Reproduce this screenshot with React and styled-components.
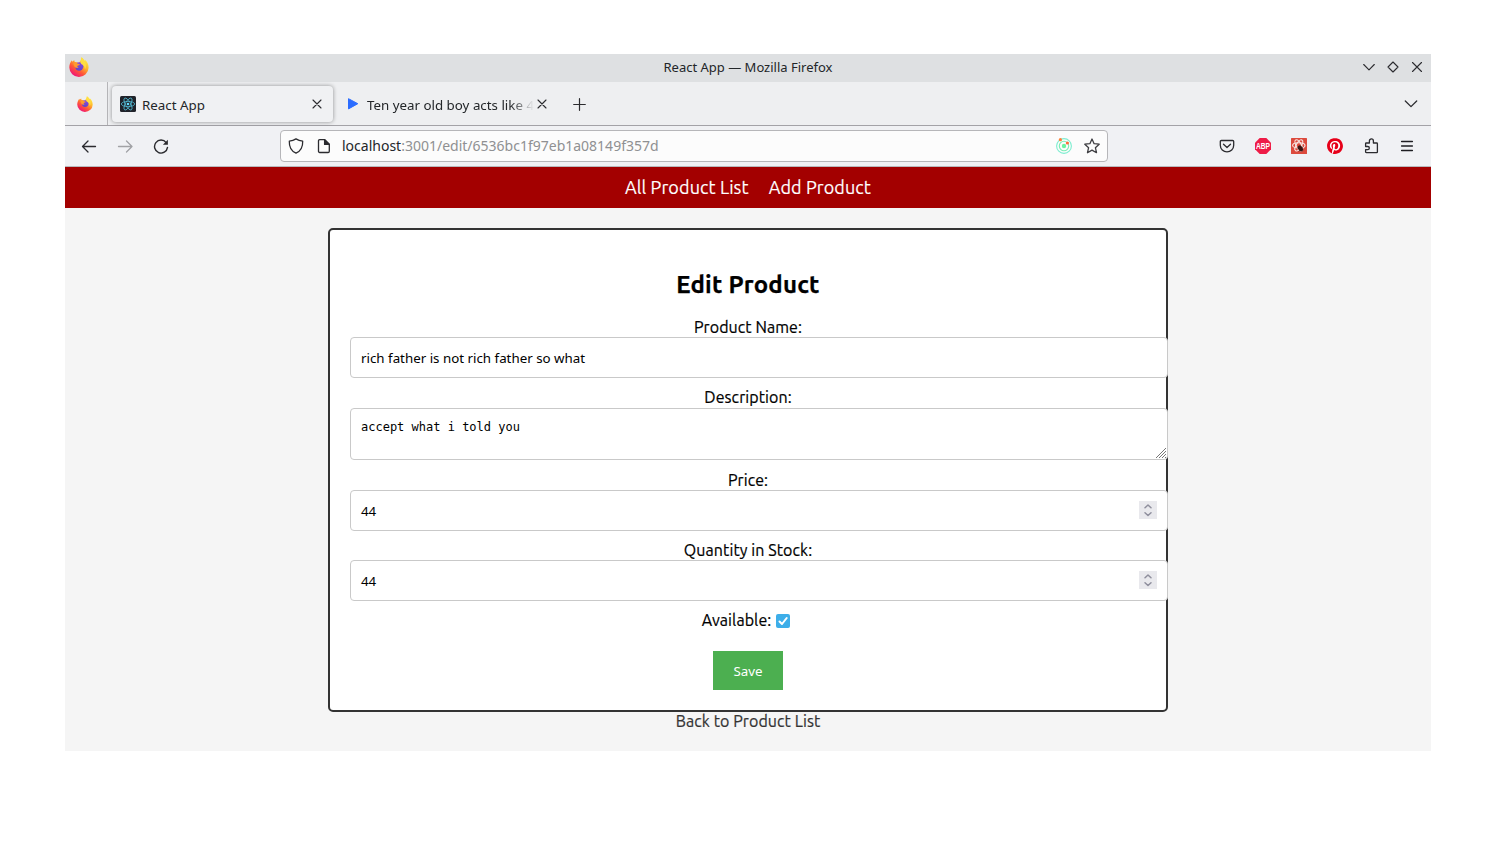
import React from "react";
import styled, { createGlobalStyle } from "styled-components";

const GlobalStyle = createGlobalStyle`
  *, *::before, *::after { box-sizing: border-box; }
  body { margin: 0; background: #fff; font-family: "Noto Sans", sans-serif; font-size: 13.333px; color: #232629; }
  svg { display: block; flex: none; }
`;

const pageFont = `Ubuntu, "Noto Sans", sans-serif`;

const Desktop = styled.div`
  padding: 54px 65px 0;
  height: 854px;
  width: 1496px;
`;
const Window = styled.div`
  display: flex;
  flex-direction: column;
  height: 697px;
  background: #f5f5f5;
  overflow: hidden;
`;
const TitleBar = styled.header`
  display: grid;
  grid-template-columns: 1fr auto 1fr;
  align-items: center;
  height: 28px;
  padding: 0 3px 0 4px;
  background: #dee0e2;
  > svg { margin-top: -2px; }
`;
const WindowTitle = styled.span`
  line-height: 26px;
  height: 28px;
  margin-right: 1px;
  font-size: 13px;
`;
const WindowButtons = styled.div`
  display: flex;
  justify-content: flex-end;
  height: 28px;
  padding: 0 0 2px;
  margin-right: -1px;
`;
const Slot = styled.span`
  display: flex;
  align-items: center;
  justify-content: center;
  flex: none;
  width: ${(p) => p.$w}px;
  height: ${(p) => p.$h || 28}px;
`;
const TabStrip = styled.div`
  display: flex;
  align-items: center;
  height: 44px;
  background: #eeeff1;
  border-bottom: 1px solid #a3a2a7;
`;
const PinnedTab = styled.div`
  display: flex;
  align-items: center;
  width: 43px;
  height: 43px;
  padding-left: 12px;
  border-right: 1px solid #b5b5b8;
`;
const Tab = styled.div`
  display: flex;
  align-items: center;
  height: 36px;
  width: ${(p) => p.$w}px;
  margin-left: ${(p) => p.$ml}px;
  padding-left: ${(p) => p.$pl}px;
  border-radius: 4px;
  background: ${(p) => (p.$active ? "#f0f1f3" : "transparent")};
  box-shadow: ${(p) => (p.$active ? "0 0 4px rgba(0,0,0,.4)" : "none")};
`;
const TabLabel = styled.span`
  flex: none;
  width: ${(p) => p.$w}px;
  margin-left: ${(p) => p.$ml}px;
  padding-top: 2px;
  overflow: hidden;
  white-space: nowrap;
  line-height: 20px;
  mask-image: ${(p) => (p.$fade ? "linear-gradient(to right, #000 calc(100% - 24px), transparent)" : "none")};
`;
const Spacer = styled.span`
  flex: 1;
`;
const Toolbar = styled.div`
  display: flex;
  align-items: center;
  height: 41px;
  padding: 0 6px;
  background: #f0f1f4;
  border-bottom: 1px solid #b9b9bc;
`;
const UrlBar = styled.div`
  display: flex;
  align-items: center;
  width: 828px;
  height: 32px;
  margin-left: 101px;
  padding: 0 1px;
  background: #fcfcfc;
  border: 1px solid #b6b6b9;
  border-radius: 4px;
`;
const Url = styled.span`
  margin: -1px 0 0 4px;
  font-size: 14px;
  line-height: 20px;
  color: #8f9092;
  b { font-weight: 400; color: #232629; }
`;
const Nav = styled.nav`
  display: flex;
  justify-content: center;
  gap: 20px;
  height: 41px;
  background: #a30000;
  -webkit-text-stroke: 0.15px;
`;
const NavLink = styled.a`
  color: #fff;
  font: 18px/41px ${pageFont};
  letter-spacing: 0.1px;
`;
const Main = styled.main`
  display: flex;
  flex-direction: column;
  align-items: center;
  padding-top: 20px;
  background: #f5f5f5;
`;
const Card = styled.form`
  display: flex;
  flex-direction: column;
  align-items: center;
  width: 840px;
  height: 484px;
  padding: 0 20px;
  background: #fff;
  border: 2px solid #333;
  border-radius: 5px;
`;
const Heading = styled.h2`
  margin: 40px 0 17px;
  color: #000;
  font: 700 24px/30px ${pageFont};
  letter-spacing: 0.2px;
  -webkit-text-stroke: 0.25px;
`;
const Field = styled.label`
  display: flex;
  flex-direction: column;
  align-items: center;
  width: 100%;
  margin-bottom: ${(p) => p.$mb}px;
`;
const Caption = styled.span`
  height: 20px;
  color: #000;
  font: 16px/${(p) => p.$lh || 20}px ${pageFont};
  letter-spacing: 0.08px;
  -webkit-text-stroke: 0.2px;
`;
const Box = styled.div`
  display: flex;
  align-items: center;
  align-self: flex-start;
  width: 818px;
  height: 41px;
  padding: 0 10px;
  background: #fff;
  border: 1px solid #c9c9c9;
  border-radius: 4px;
  color: #000;
`;
const TextArea = styled(Box)`
  height: 52px;
  padding: 11px 0 0 10px;
  align-items: flex-start;
  justify-content: space-between;
  font: 12px/15px "DejaVu Sans Mono", monospace;
  svg { align-self: flex-end; }
`;
const Stepper = styled.span`
  display: flex;
  align-items: center;
  justify-content: center;
  width: 18px;
  height: 18px;
  margin: -1px 0 0 auto;
  background: #e9e9ed;
`;
const CheckRow = styled.div`
  display: flex;
  align-items: center;
  gap: 5px;
  height: 20px;
  margin: -1px 4px 0 0;
`;
const Check = styled.span`
  display: flex;
  width: 14px;
  height: 14px;
  margin-top: 2px;
  border-radius: 2px;
  background: #3daee9;
`;
const SaveButton = styled.button`
  width: 70px;
  height: 39px;
  margin-top: 21px;
  padding: 0;
  border: 0;
  background: #4caf50;
  color: #fff;
  font: 13.333px/18px "Noto Sans", sans-serif;
`;
const BackLink = styled.a`
  margin-top: -1px;
  color: #333;
  font: 16px/20px ${pageFont};
  letter-spacing: 0.08px;
  -webkit-text-stroke: 0.2px;
`;

const Line = ({ d, size = 16, color = "#2b2b2f", w = 1.2, box = 16, children }) => (
  <svg width={size} height={size} viewBox={`0 0 ${box} ${box}`} fill="none" stroke={color} strokeWidth={w} strokeLinecap="round" strokeLinejoin="round">
    {d && <path d={d} />}
    {children}
  </svg>
);

const FirefoxIcon = ({ size, id }) => (
  <svg width={size} height={size} viewBox="0 0 20 20">
    <defs>
      <linearGradient id={`${id}o`} x1=".85" y1=".1" x2=".25" y2=".95">
        <stop offset="0" stopColor="#fff04a" />
        <stop offset=".35" stopColor="#ffb52c" />
        <stop offset=".65" stopColor="#ff5a36" />
        <stop offset="1" stopColor="#f0127a" />
      </linearGradient>
      <linearGradient id={`${id}p`} x1=".7" y1="0" x2=".3" y2="1">
        <stop offset="0" stopColor="#8a4ae0" />
        <stop offset="1" stopColor="#5d43c8" />
      </linearGradient>
    </defs>
    <path fill={`url(#${id}o)`} d="M12.4.2c1.5 1 2.4 2.3 2.9 3.5.5-.1.6-.5.6-.9 2.5 2 3.8 4.9 3.7 8A9.6 9.6 0 0 1 10 20 9.6 9.6 0 0 1 .3 10.6C.3 7.8 1.3 5.3 2.9 3.3l.3 1.5C4 4 4.6 3.5 5.4 3.2c-.1.8.1 1.4.4 1.9 1.2-.2 2.7.1 3.7.8 1.4-1.3 3-2.9 2.9-5.7z" />
    <circle cx="10.2" cy="9.5" r="4.2" fill={`url(#${id}p)`} />
    <path fill="#ff9a2e" d="M4.4 6.3c1.600-1 3.500-.7 4.500.4.800.2 1.700.2 1.900.7.100.6-1.600.9-2.300 1.400-.7.700.1 1.300 1.200 1.600-1.400.7-3 .5-4-.5-.5-1-1.300-2.300-1.300-3.600z" />
    <path fill="#ffdf42" d="M12.4.2c1.5 1 2.4 2.3 2.9 3.5 1.9 2.7 2.4 6.2.6 8.9.1-2.7-1-4-2.7-5.1-1.7-1.1-2.2-1.6-.8-7.3z" />
  </svg>
);

const ReactTabIcon = () => (
  <svg width="16" height="16" viewBox="0 0 16 16">
    <rect width="16" height="16" rx="1.5" fill="#20232a" />
    <g fill="none" stroke="#52b9d2" strokeWidth=".8">
      {[30, 90, 150].map((a) => (
        <ellipse key={a} cx="8" cy="8" rx="6.7" ry="2.6" transform={`rotate(${a - 30} 8 8)`} />
      ))}
    </g>
    <circle cx="8" cy="8" r="1.3" fill="#61dafb" />
  </svg>
);

const OrbitIcon = () => (
  <svg width="16" height="16" viewBox="0 0 16 16" fill="none">
    <circle cx="8" cy="8" r="7.4" stroke="#7eedd0" strokeWidth="1.1" />
    <circle cx="8" cy="8" r="4.7" stroke="#7cecb6" strokeWidth="1.1" />
    <circle cx="8" cy="8" r="2.2" fill="#6cf2a0" />
    <circle cx="4.4" cy="1.7" r="1.6" fill="#ff8138" />
    <circle cx="11.4" cy="5" r="1.6" fill="#ff6a3a" />
  </svg>
);

const AdblockIcon = () => (
  <svg width="16" height="16" viewBox="0 0 16 16">
    <path d="M4.7 0h6.6L16 4.7v6.6L11.3 16H4.7L0 11.3V4.7z" fill="#ee1c47" />
    <text x="8" y="11" textAnchor="middle" fill="#fff" fontSize="8.4" fontWeight="700" textLength="14" lengthAdjust="spacingAndGlyphs" fontFamily="Liberation Sans, sans-serif">ABP</text>
  </svg>
);

const ReactBugIcon = () => (
  <svg width="16" height="16" viewBox="0 0 16 16">
    <rect width="16" height="16" rx=".6" fill="#dc4a3d" />
    <g fill="none" stroke="#f9e6e3" strokeWidth="1.1">
      {[0, 60, 120].map((a) => (
        <ellipse key={a} cx="7.8" cy="7.4" rx="6.2" ry="2.6" transform={`rotate(${a} 7.8 7.4)`} />
      ))}
    </g>
    <ellipse cx="9.4" cy="10.4" rx="2.2" ry="3.2" fill="#3a1512" transform="rotate(-35 9.4 10.4)" />
    <path d="M6 9.8l6.5 2M8 13.5l4-5M9.5 8l1.5 5.5" stroke="#3a1512" strokeWidth=".7" />
  </svg>
);

const PinterestIcon = () => (
  <svg width="16" height="16" viewBox="0 0 24 24">
    <circle cx="12" cy="12" r="11.5" fill="#fff" />
    <path fill="#e60019" d="M12.017 0C5.396 0 .029 5.367.029 11.987c0 5.079 3.158 9.417 7.618 11.162-.105-.949-.199-2.403.041-3.439.219-.937 1.406-5.957 1.406-5.957s-.359-.72-.359-1.781c0-1.663.967-2.911 2.168-2.911 1.024 0 1.518.769 1.518 1.688 0 1.029-.653 2.567-.992 3.992-.285 1.193.6 2.165 1.775 2.165 2.128 0 3.768-2.245 3.768-5.487 0-2.861-2.063-4.869-5.008-4.869-3.41 0-5.409 2.562-5.409 5.199 0 1.033.394 2.143.889 2.741.099.12.112.225.085.345-.09.375-.293 1.199-.334 1.363-.053.225-.172.271-.401.165-1.495-.69-2.433-2.878-2.433-4.646 0-3.776 2.748-7.252 7.92-7.252 4.158 0 7.392 2.967 7.392 6.923 0 4.135-2.607 7.462-6.233 7.462-1.214 0-2.354-.629-2.758-1.379l-.749 2.848c-.269 1.045-1.004 2.352-1.498 3.146 1.123.345 2.306.535 3.55.535 6.607 0 11.985-5.365 11.985-11.987C23.97 5.39 18.592.026 11.985.026z" />
  </svg>
);

const Arrows = () => (
  <Stepper>
    <Line size={18} box={18} color="#8f8f9d" w={1.5} d="M6 6.8L9 4l3 2.8M6 11.7l3 2.8 3-2.8" />
  </Stepper>
);

export default function App() {
  return (
    <Desktop>
      <GlobalStyle />
      <Window>
        <TitleBar>
          <FirefoxIcon size={20} id="a" />
          <WindowTitle>React App — Mozilla Firefox</WindowTitle>
          <WindowButtons>
            <Slot $w={24} $h={26}><Line d="M2.7 5.5L8 10.8l5.3-5.3" w={1.1} /></Slot>
            <Slot $w={24} $h={26}><Line d="M8 3l5 5-5 5-5-5z" w={1.1} /></Slot>
            <Slot $w={24} $h={26}><Line d="M3.5 3.5l9 9M12.5 3.5l-9 9" w={1.1} /></Slot>
          </WindowButtons>
        </TitleBar>
        <TabStrip>
          <PinnedTab><FirefoxIcon size={16} id="b" /></PinnedTab>
          <Tab $active $w={221} $ml={4} $pl={8}>
            <ReactTabIcon />
            <TabLabel $w={167} $ml={6}>React App</TabLabel>
            <Line d="M4 4l8 8M12 4l-8 8" w={1.1} />
          </Tab>
          <Tab $w={225} $ml={4} $pl={9}>
            <svg width="16" height="16" viewBox="0 0 16 16"><path d="M2.5 2.7l9.3 5-9.3 5.2z" fill="#2b6cff" stroke="#2b6cff" strokeLinejoin="round" /></svg>
            <TabLabel $w={167} $ml={5} $fade>Ten year old boy acts like 4</TabLabel>
            <Line d="M4 4l8 8M12 4l-8 8" w={1.1} />
          </Tab>
          <Slot $w={36}><Line d="M7.5 2.7v11.600M1.700 8.500h11.600" w={1.2} /></Slot>
          <Spacer />
          <Slot $w={40}><Line d="M2.3 5L8 10.6 13.7 5" w={1.3} /></Slot>
        </TabStrip>
        <Toolbar>
          <Slot $w={36}><Line d="M14.5 8.5H1.5M7 3L1.5 8.5 7 14" w={1.3} /></Slot>
          <Slot $w={36}><Line d="M1.5 8.5H15M9.5 3L15 8.5 9.5 14" color="#a1a2a5" w={1.3} /></Slot>
          <Slot $w={36}>
            <Line d="M13.2 4.6A6.5 6.5 0 1 0 14.5 9.4" w={1.4}>
              <path d="M14.9 1.7v5h-5z" fill="#2b2b2f" stroke="none" />
            </Line>
          </Slot>
          <UrlBar>
            <Slot $w={28}><Line d="M8 .9C6.2 2.1 3.9 2.9 1.3 3.1c-.2 5 1.7 9.9 6.7 12 5-2.1 6.9-7 6.7-12C12.1 2.9 9.8 2.1 8 .9z" w={1.3} /></Slot>
            <Slot $w={28}>
              <Line d="M3.7 1.7h5l4.6 4.6v7c0 .7-.5 1.2-1.2 1.2H3.7c-.7 0-1.2-.5-1.2-1.2V2.9c0-.7.5-1.2 1.2-1.2z" w={1.3}>
                <path d="M8.6 1.7l4.7 4.7H8.6z" fill="#2b2b2f" />
              </Line>
            </Slot>
            <Url><b>localhost</b>:3001/edit/6536bc1f97eb1a08149f357d</Url>
            <Spacer />
            <Slot $w={28}><OrbitIcon /></Slot>
            <Slot $w={28}><Line d="M8 1l2.1 4.7 5.1.5-3.8 3.5 1.1 5L8 12.1l-4.5 2.6 1.1-5L.8 6.2l5.1-.5z" color="#3e3e42" w={1.3} /></Slot>
          </UrlBar>
          <Spacer />
          <Slot $w={36}>
            <Line d="M2.4 2.5h11.2c.6 0 1.1.5 1.1 1.1V7.2a6.7 6.7 0 0 1-13.4 0V3.6c0-.6.5-1.100 1.100-1.100zM4.500 6.300L8 9.500l3.500-3.200" w={1.3} />
          </Slot>
          <Slot $w={36}><AdblockIcon /></Slot>
          <Slot $w={36}><ReactBugIcon /></Slot>
          <Slot $w={36}><PinterestIcon /></Slot>
          <Slot $w={36}>
            <Line w={1.3} d="M2.6 8.5V5.6c0-.4.2-.6.6-.6h3.200V2.900a2 2 0 0 1 4 0V5h3.300c.4 0 .7.3.7.7v8.200c0 .4-.3.7-.7.7H3.300c-.4 0-.7-.3-.7-.7v-2.300h2.200a1.550 1.550 0 0 0 0-3.100z" />
          </Slot>
          <Slot $w={36}><Line d="M2.6 3.500h10.800M2.600 8h10.800M2.600 12.500h10.800" w={1.35} color="#1e1e22" /></Slot>
        </Toolbar>
        <Nav>
          <NavLink>All Product List</NavLink>
          <NavLink>Add Product</NavLink>
        </Nav>
        <Main>
          <Card>
            <Heading>Edit Product</Heading>
            <Field $mb={10}>
              <Caption>Product Name:</Caption>
              <Box>rich father is not rich father so what</Box>
            </Field>
            <Field $mb={10}>
              <Caption $lh={18}>Description:</Caption>
              <TextArea>
                accept what i told you
                <svg width="12" height="12" viewBox="0 0 12 12" stroke="#777" strokeWidth="1"><path d="M1 11L11 1M4 11l7-7M7 11l4-4M10 11l1-1" /></svg>
              </TextArea>
            </Field>
            <Field $mb={9}>
              <Caption>Price:</Caption>
              <Box>44<Arrows /></Box>
            </Field>
            <Field $mb={10}>
              <Caption>Quantity in Stock:</Caption>
              <Box>44<Arrows /></Box>
            </Field>
            <CheckRow>
              <Caption>Available:</Caption>
              <Check><Line size={14} box={14} color="#fff" w={2} d="M3.5 7.5L6 10l4.7-6" /></Check>
            </CheckRow>
            <SaveButton type="button">Save</SaveButton>
          </Card>
          <BackLink>Back to Product List</BackLink>
        </Main>
      </Window>
    </Desktop>
  );
}
